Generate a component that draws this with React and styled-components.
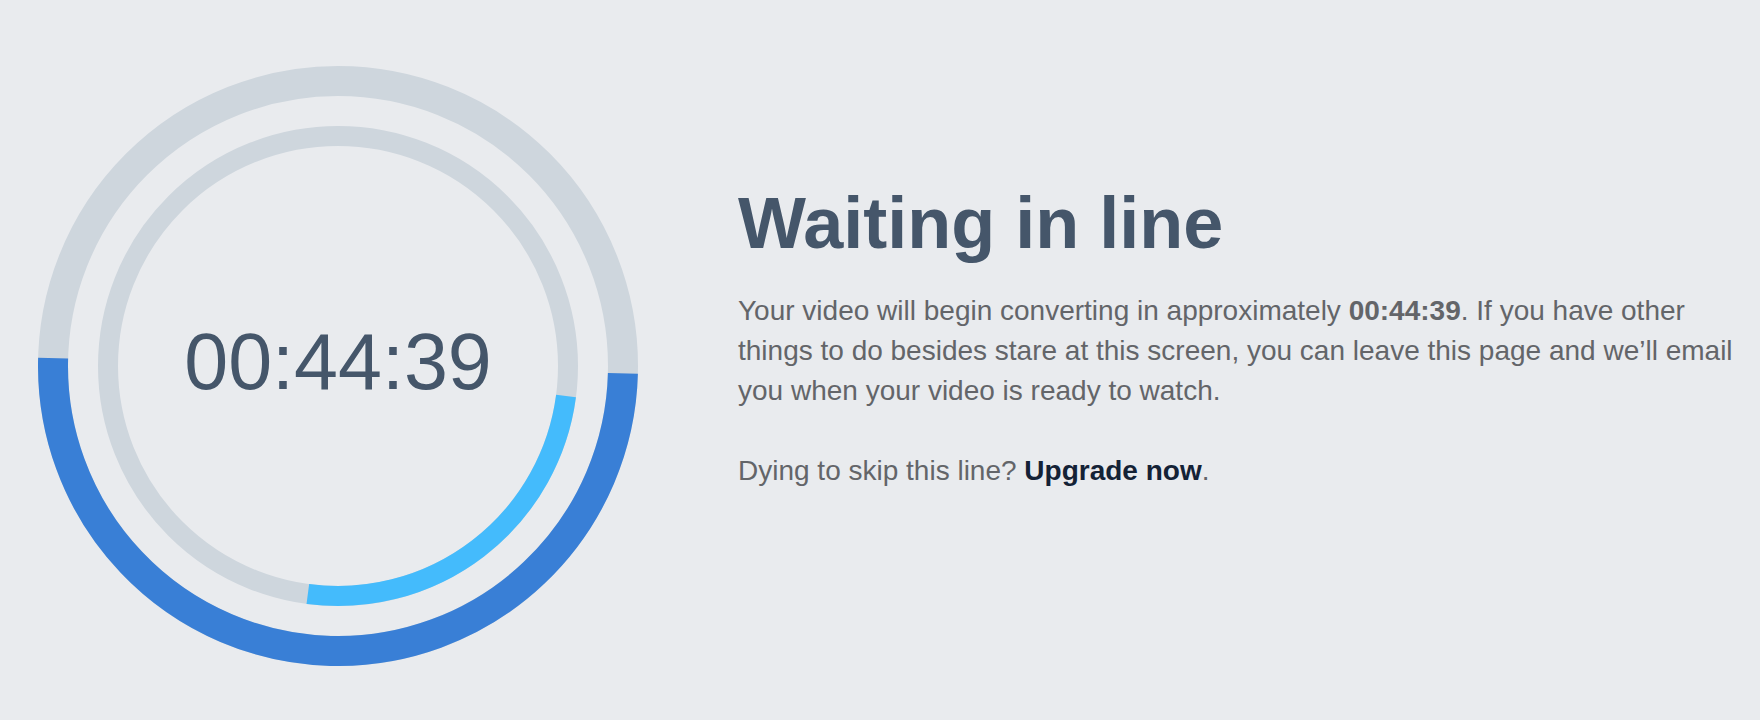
import React from 'react';
import styled, { createGlobalStyle } from 'styled-components';

const GlobalStyle = createGlobalStyle`
  html, body {
    margin: 0;
    padding: 0;
    background: #e9ebee;
  }
  body {
    font-family: "Liberation Sans", Arial, Helvetica, sans-serif;
    -webkit-font-smoothing: antialiased;
  }
`;

const Page = styled.div`
  display: flex;
  align-items: flex-start;
  gap: 100px;
  padding: 66px 0 0 38px;
  height: 720px;
  box-sizing: border-box;
  overflow: hidden;
`;

const Dial = styled.div`
  display: grid;
  place-items: center;
  width: 600px;
  height: 600px;
  flex-shrink: 0;

  & > * {
    grid-area: 1 / 1;
  }
`;

const Countdown = styled.div`
  font-size: 79px;
  line-height: 1;
  color: #45566a;
  margin-top: -10px;
`;

const Info = styled.div`
  max-width: 1010px;
  padding-top: 121px;
`;

const Title = styled.h1`
  margin: 0 0 32px;
  font-size: 72px;
  line-height: 72px;
  font-weight: 700;
  color: #45566a;
`;

const Text = styled.p`
  margin: 0 0 40px;
  font-size: 28px;
  line-height: 40px;
  color: #636569;

  strong {
    font-weight: 700;
  }
`;

const Upgrade = styled.a`
  color: #142236;
  font-weight: 700;
  text-decoration: none;
`;

const SIZE = 600;
const C = SIZE / 2;

function Ring({ r, width, color, progress, rotate, track }) {
  const circumference = 2 * Math.PI * r;
  return (
    <g>
      <circle cx={C} cy={C} r={r} fill="none" stroke={track} strokeWidth={width} />
      <circle
        cx={C}
        cy={C}
        r={r}
        fill="none"
        stroke={color}
        strokeWidth={width}
        strokeDasharray={`${circumference * progress} ${circumference}`}
        transform={`rotate(${rotate} ${C} ${C})`}
      />
    </g>
  );
}

function App() {
  return (
    <>
      <GlobalStyle />
      <Page>
        <Dial>
          <svg width={SIZE} height={SIZE} viewBox={`0 0 ${SIZE} ${SIZE}`}>
            <Ring r={285} width={30} track="#ced6dd" color="#397fd6" progress={0.5} rotate={1.5} />
            <Ring r={230} width={20} track="#ced6dd" color="#44bbfc" progress={0.25} rotate={7.5} />
          </svg>
          <Countdown>00:44:39</Countdown>
        </Dial>
        <Info>
          <Title>Waiting in line</Title>
          <Text>
            Your video will begin converting in approximately <strong>00:44:39</strong>. If you have other
            things to do besides stare at this screen, you can leave this page and we’ll email
            you when your video is ready to watch.
          </Text>
          <Text>
            Dying to skip this line? <Upgrade href="#">Upgrade now</Upgrade>.
          </Text>
        </Info>
      </Page>
    </>
  );
}

export default App;
